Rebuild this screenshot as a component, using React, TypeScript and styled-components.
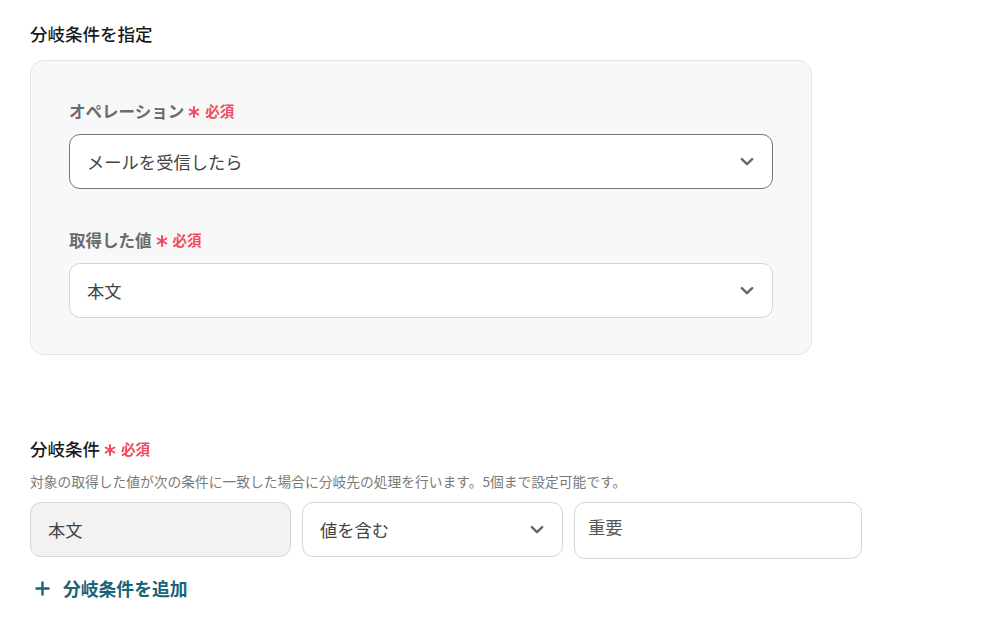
import React from "react";
import styled, { createGlobalStyle } from "styled-components";

const Global = createGlobalStyle`
  html, body { margin: 0; padding: 0; background: #fff; }
  body { font-family: "Noto Sans CJK JP", "Noto Sans", sans-serif; color: #222; }
`;

const Page = styled.div`
  padding: 21px 30px 0 30px;
  display: flex;
  flex-direction: column;
`;

const Title = styled.h2`
  margin: 0 0 13px 0;
  font-size: 17.5px;
  font-weight: 500;
  line-height: 26px;
  color: #1a1a1a;
`;

const Panel = styled.div`
  width: 782px;
  box-sizing: border-box;
  background: #f8f8f8;
  border: 1px solid #e4e4e4;
  border-radius: 14px;
  padding: 37px 38px 36px 38px;
  display: flex;
  flex-direction: column;
  gap: 38px;
`;

const Field = styled.div`
  display: flex;
  flex-direction: column;
  gap: 10px;
`;

const Label = styled.div<{ $dark?: boolean }>`
  display: flex;
  align-items: center;
  font-size: ${(p) => (p.$dark ? "17.5px" : "16.5px")};
  font-weight: ${(p) => (p.$dark ? 500 : 700)};
  color: ${(p) => (p.$dark ? "#1a1a1a" : "#6b6b6b")};
  line-height: 26px;
  height: 26px;
`;

const Required = styled.span`
  display: inline-flex;
  align-items: center;
  margin-left: 4px;
  color: #f04a5e;
  font-size: 14.5px;
  font-weight: 700;
  gap: 5px;
`;

const Star = () => (
  <svg width="12" height="12" viewBox="0 0 12 12" style={{ marginTop: 2 }}>
    <g stroke="#f04a5e" strokeWidth="2" strokeLinecap="round">
      <path d="M6 1 V11" />
      <path d="M1.7 3.5 L10.3 8.5" />
      <path d="M1.7 8.5 L10.3 3.5" />
    </g>
  </svg>
);

const SelectBox = styled.div<{ $active?: boolean; $gray?: boolean }>`
  box-sizing: border-box;
  height: 55px;
  border: 1px solid ${(p) => (p.$active ? "#777" : "#d3d6dc")};
  border-radius: 11px;
  background: ${(p) => (p.$gray ? "#f2f2f2" : "#fff")};
  display: flex;
  align-items: center;
  justify-content: space-between;
  padding: 0 18px 0 17px;
  font-size: 17.3px;
  color: #444;
`;

const Chevron = () => (
  <svg width="14" height="10" viewBox="0 0 14 10" fill="none">
    <path d="M1.8 2.2 L7 7.2 L12.2 2.2" stroke="#666" strokeWidth="2.4" strokeLinecap="round" strokeLinejoin="round" />
  </svg>
);

const Section = styled.div`
  margin-top: 81px;
  display: flex;
  flex-direction: column;
`;

const Desc = styled.div`
  margin-top: 9px;
  font-size: 13.75px;
  color: #7a7a7a;
  line-height: 20px;
`;

const Row = styled.div`
  margin-top: 11px;
  display: flex;
  gap: 11px;
`;

const Cell = styled(SelectBox)<{ $w: number }>`
  width: ${(p) => p.$w}px;
`;

const InputCell = styled(SelectBox)<{ $w: number }>`
  width: ${(p) => p.$w}px;
  height: 57px;
  align-items: flex-start;
  padding: 11px 14px 0 13px;
  line-height: 26px;
  color: #555;
`;

const AddButton = styled.button`
  margin-top: 16px;
  align-self: flex-start;
  border: none;
  background: none;
  padding: 0 0 0 5px;
  height: 26px;
  display: flex;
  align-items: center;
  gap: 13px;
  font-family: inherit;
  font-size: 17.8px;
  font-weight: 700;
  color: #17637a;
  cursor: pointer;
`;

export default function App() {
  return (
    <>
      <Global />
      <Page>
        <Title>分岐条件を指定</Title>
        <Panel>
          <Field>
            <Label>
              オペレーション
              <Required><Star />必須</Required>
            </Label>
            <SelectBox $active>
              メールを受信したら
              <Chevron />
            </SelectBox>
          </Field>
          <Field>
            <Label>
              取得した値
              <Required><Star />必須</Required>
            </Label>
            <SelectBox>
              本文
              <Chevron />
            </SelectBox>
          </Field>
        </Panel>
        <Section>
          <Label $dark>
            分岐条件
            <Required><Star />必須</Required>
          </Label>
          <Desc>対象の取得した値が次の条件に一致した場合に分岐先の処理を行います。5個まで設定可能です。</Desc>
          <Row>
            <Cell $w={261} $gray>本文</Cell>
            <Cell $w={261}>
              値を含む
              <Chevron />
            </Cell>
            <InputCell $w={288}>重要</InputCell>
          </Row>
          <AddButton>
            <svg width="15" height="15" viewBox="0 0 15 15">
              <path d="M7.5 0.5 V14.5 M0.5 7.5 H14.5" stroke="#17637a" strokeWidth="2.4" />
            </svg>
            分岐条件を追加
          </AddButton>
        </Section>
      </Page>
    </>
  );
}
